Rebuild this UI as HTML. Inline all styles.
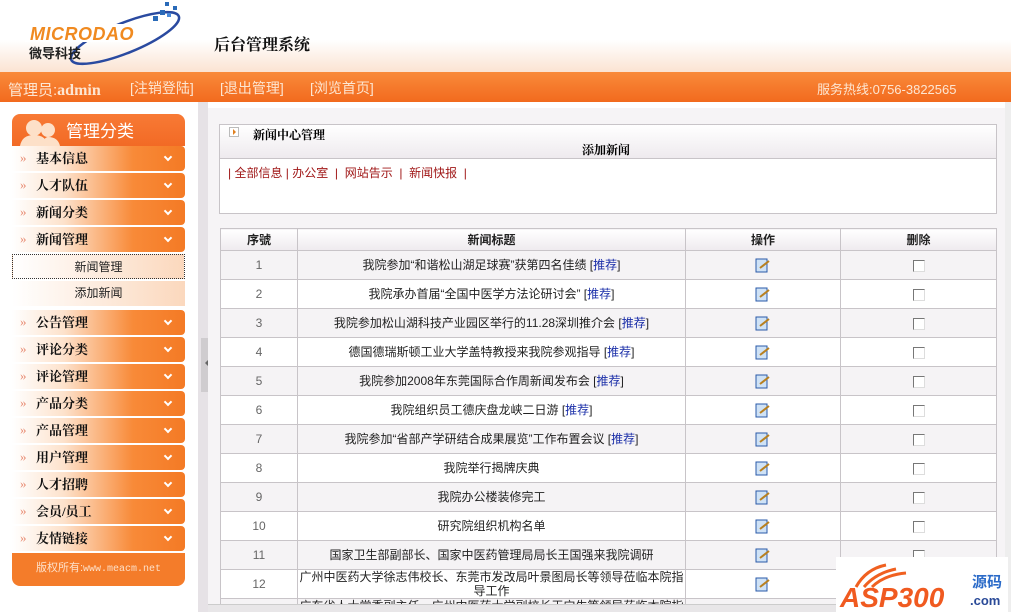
<!DOCTYPE html>
<html style="overflow:hidden;width:1011px;height:612px"><head><meta charset="utf-8"><style>
*{margin:0;padding:0;box-sizing:border-box}
body{width:1011px;height:612px;overflow:hidden;background:#fff;font-family:"Liberation Sans","Noto Sans CJK SC",sans-serif;font-size:12px;position:relative}
#hd{position:absolute;left:0;top:0;width:1011px;height:72px;background:linear-gradient(#fff 0,#fff 40px,#fbe3d2 72px)}
#bar{position:absolute;left:0;top:72px;width:1011px;height:30px;background:linear-gradient(#f98a3a,#f26a1e);color:#fde6d2;font-size:14px}
#bar span{position:absolute;top:6px}
#sep{position:absolute;left:198px;top:102px;width:10px;height:510px;background:#e6e2e6}
#handle{position:absolute;left:201px;top:338px;width:7px;height:54px;background:#cfcccf}
#main{position:absolute;left:208px;top:108px;width:797px;height:504px;background:#f6f4f6}
#sb{position:absolute;left:1005px;top:102px;width:6px;height:510px;background:#eee}
.it{position:absolute;left:12px;width:173px;height:25px;background:linear-gradient(90deg,#fff 0%,#fde2cc 30%,#f88a38 70%,#f47a25 100%);border-radius:0 4px 4px 0;font-weight:bold;font-size:13px;color:#111;line-height:25px;padding-left:24px;font-family:"Liberation Serif","Noto Serif CJK SC",serif}
.it:before{content:"»";position:absolute;left:8px;top:-1px;color:#e88a70;font-weight:normal;font-size:13px}
.it:after{content:"";position:absolute;right:14px;top:8px;width:4px;height:4px;border-right:2px solid #fff;border-bottom:2px solid #fff;transform:rotate(45deg)}
.sub{position:absolute;left:12px;width:173px;height:25px;background:linear-gradient(90deg,#fff,#fbd8bd);text-align:center;line-height:25px;font-size:12px;color:#222}
#tw{position:absolute;left:220px;top:228px;width:777px;height:376px;overflow:hidden}
table{border-collapse:collapse;width:777px;background:#fff;table-layout:fixed}
td{border:1px solid #c8c4c8;text-align:center;height:29px;font-size:12px;color:#222;line-height:14px}
tr.h td{height:22px;font-weight:bold;background:linear-gradient(#fff,#eeeaee)}
tr:nth-child(even) td{background:#f5f3f5}
td.n{color:#666}
a{color:#1a2ea8;text-decoration:none}
.cb{display:inline-block;width:12px;height:12px;border:1px solid #777;border-right-color:#ddd;border-bottom-color:#ddd;background:#fff;vertical-align:middle}
.ed{display:inline-block;vertical-align:middle}
</style></head><body>
<div id="hd">
<svg style="position:absolute;left:25px;top:0" width="160" height="66">
<ellipse cx="100" cy="38" rx="58" ry="15" transform="rotate(-22 100 38)" fill="none" stroke="#2a4aa0" stroke-width="2.5"/>
<rect x="140" y="2" width="4" height="4" fill="#2a6ab8"/><rect x="148" y="6" width="4" height="4" fill="#2a6ab8"/><rect x="135" y="10" width="5" height="5" fill="#2a6ab8"/><rect x="142" y="13" width="4" height="4" fill="#4a8ad8"/><rect x="128" y="16" width="5" height="5" fill="#2a6ab8"/>
<rect x="0" y="24" width="118" height="18" fill="#fff"/>
<text x="5" y="40" font-family="Liberation Sans" font-style="italic" font-weight="bold" font-size="18" fill="#f08a20" letter-spacing="0.5">MICRODAO</text>
<text x="4" y="58" font-family="Noto Sans CJK SC" font-weight="bold" font-size="13" fill="#222">微导科技</text>
</svg>
<div style="position:absolute;left:214px;top:32px;font-size:16px;font-weight:bold;color:#111;font-family:'Noto Serif CJK SC',serif">后台管理系统</div>
</div>
<div id="bar"><span style="left:8px;top:7px;font-size:15px">管理员:<b style="font-family:'Liberation Serif';font-size:16px">admin</b></span><span style="left:130px">[注销登陆]</span><span style="left:220px">[退出管理]</span><span style="left:310px">[浏览首页]</span><span style="left:817px;font-size:13px;top:7px">服务热线:0756-3822565</span></div>
<div id="sep"></div><div id="handle"><span style="position:absolute;left:1px;top:22px;border:3px solid transparent;border-right-color:#666"></span></div>
<div id="sb"></div>
<div style="position:absolute;left:12px;top:114px;width:173px;height:32px;background:linear-gradient(#f87a35,#f26a25);border-radius:8px 8px 0 0;color:#fff;font-size:17px;line-height:36px;padding-left:54px">管理分类
<svg style="position:absolute;left:6px;top:4px" width="44" height="28"><circle cx="16" cy="10" r="8" fill="#fde0c8"/><circle cx="30" cy="12" r="7" fill="#fde0c8"/><path d="M2 28 Q4 17 16 17 Q28 17 30 28Z M24 28 Q26 19 30 19 Q40 19 42 28Z" fill="#fde0c8"/></svg></div>
<div class="it" style="top:146px">基本信息</div>
<div class="it" style="top:173px">人才队伍</div>
<div class="it" style="top:200px">新闻分类</div>
<div class="it" style="top:227px">新闻管理</div>
<div class="sub" style="top:254px;border:1px dotted #333">新闻管理</div>
<div class="sub" style="top:281px">添加新闻</div>
<div class="it" style="top:310px">公告管理</div>
<div class="it" style="top:337px">评论分类</div>
<div class="it" style="top:364px">评论管理</div>
<div class="it" style="top:391px">产品分类</div>
<div class="it" style="top:418px">产品管理</div>
<div class="it" style="top:445px">用户管理</div>
<div class="it" style="top:472px">人才招聘</div>
<div class="it" style="top:499px">会员/员工</div>
<div class="it" style="top:526px">友情链接</div>
<div style="position:absolute;left:12px;top:553px;width:173px;height:33px;background:#f47c2a;border-radius:0 0 8px 8px;color:#fde0c8;font-size:11px;text-align:center;line-height:30px">版权所有:<span style="font-family:'Liberation Mono';font-size:10px">www.meacm.net</span></div>
<div id="main"></div>
<div style="position:absolute;left:219px;top:124px;width:778px;height:90px;background:#fff;border:1px solid #c8c4c8">
<div style="height:34px;background:linear-gradient(#fff,#eeeaee);border-bottom:1px solid #c8c4c8;position:relative">
<span style="position:absolute;left:9px;top:2px;width:10px;height:10px;border:1px solid #bbb;background:#fff"><span style="position:absolute;left:3px;top:1px;border:3px solid transparent;border-left-color:#e08020"></span></span>
<b style="position:absolute;left:33px;top:1px;font-size:12px;font-family:'Noto Serif CJK SC',serif">新闻中心管理</b>
<b style="position:absolute;left:362px;top:16px;font-size:12px;font-family:'Noto Serif CJK SC',serif">添加新闻</b></div>
<div style="color:#a01818;padding:5px 0 0 8px;font-size:12px">| 全部信息 | 办公室 &nbsp;| &nbsp;网站告示 &nbsp;| &nbsp;新闻快报 &nbsp;|</div>
</div>
<div id="tw"><table>
<colgroup><col style="width:77px"><col style="width:388px"><col style="width:155px"><col></colgroup>
<tr class="h"><td>序號</td><td>新闻标题</td><td>操作</td><td>删除</td></tr>
<tr><td class="n">1</td><td>我院参加“和谐松山湖足球赛”获第四名佳绩 [<a>推荐</a>]</td><td><svg class="ed" width="16" height="16"><rect x="1" y="2" width="11" height="13" fill="#cfe2f6" stroke="#2a5aa8"/><path d="M5 11 L14 4" stroke="#b88020" stroke-width="2"/></svg></td><td><span class="cb"></span></td></tr>
<tr><td class="n">2</td><td>我院承办首届“全国中医学方法论研讨会” [<a>推荐</a>]</td><td><svg class="ed" width="16" height="16"><rect x="1" y="2" width="11" height="13" fill="#cfe2f6" stroke="#2a5aa8"/><path d="M5 11 L14 4" stroke="#b88020" stroke-width="2"/></svg></td><td><span class="cb"></span></td></tr>
<tr><td class="n">3</td><td>我院参加松山湖科技产业园区举行的11.28深圳推介会 [<a>推荐</a>]</td><td><svg class="ed" width="16" height="16"><rect x="1" y="2" width="11" height="13" fill="#cfe2f6" stroke="#2a5aa8"/><path d="M5 11 L14 4" stroke="#b88020" stroke-width="2"/></svg></td><td><span class="cb"></span></td></tr>
<tr><td class="n">4</td><td>德国德瑞斯顿工业大学盖特教授来我院参观指导 [<a>推荐</a>]</td><td><svg class="ed" width="16" height="16"><rect x="1" y="2" width="11" height="13" fill="#cfe2f6" stroke="#2a5aa8"/><path d="M5 11 L14 4" stroke="#b88020" stroke-width="2"/></svg></td><td><span class="cb"></span></td></tr>
<tr><td class="n">5</td><td>我院参加2008年东莞国际合作周新闻发布会 [<a>推荐</a>]</td><td><svg class="ed" width="16" height="16"><rect x="1" y="2" width="11" height="13" fill="#cfe2f6" stroke="#2a5aa8"/><path d="M5 11 L14 4" stroke="#b88020" stroke-width="2"/></svg></td><td><span class="cb"></span></td></tr>
<tr><td class="n">6</td><td>我院组织员工德庆盘龙峡二日游 [<a>推荐</a>]</td><td><svg class="ed" width="16" height="16"><rect x="1" y="2" width="11" height="13" fill="#cfe2f6" stroke="#2a5aa8"/><path d="M5 11 L14 4" stroke="#b88020" stroke-width="2"/></svg></td><td><span class="cb"></span></td></tr>
<tr><td class="n">7</td><td>我院参加“省部产学研结合成果展览”工作布置会议 [<a>推荐</a>]</td><td><svg class="ed" width="16" height="16"><rect x="1" y="2" width="11" height="13" fill="#cfe2f6" stroke="#2a5aa8"/><path d="M5 11 L14 4" stroke="#b88020" stroke-width="2"/></svg></td><td><span class="cb"></span></td></tr>
<tr><td class="n">8</td><td>我院举行揭牌庆典</td><td><svg class="ed" width="16" height="16"><rect x="1" y="2" width="11" height="13" fill="#cfe2f6" stroke="#2a5aa8"/><path d="M5 11 L14 4" stroke="#b88020" stroke-width="2"/></svg></td><td><span class="cb"></span></td></tr>
<tr><td class="n">9</td><td>我院办公楼装修完工</td><td><svg class="ed" width="16" height="16"><rect x="1" y="2" width="11" height="13" fill="#cfe2f6" stroke="#2a5aa8"/><path d="M5 11 L14 4" stroke="#b88020" stroke-width="2"/></svg></td><td><span class="cb"></span></td></tr>
<tr><td class="n">10</td><td>研究院组织机构名单</td><td><svg class="ed" width="16" height="16"><rect x="1" y="2" width="11" height="13" fill="#cfe2f6" stroke="#2a5aa8"/><path d="M5 11 L14 4" stroke="#b88020" stroke-width="2"/></svg></td><td><span class="cb"></span></td></tr>
<tr><td class="n">11</td><td>国家卫生部副部长、国家中医药管理局局长王国强来我院调研</td><td><svg class="ed" width="16" height="16"><rect x="1" y="2" width="11" height="13" fill="#cfe2f6" stroke="#2a5aa8"/><path d="M5 11 L14 4" stroke="#b88020" stroke-width="2"/></svg></td><td><span class="cb"></span></td></tr>
<tr><td class="n">12</td><td>广州中医药大学徐志伟校长、东莞市发改局叶景图局长等领导莅临本院指导工作</td><td><svg class="ed" width="16" height="16"><rect x="1" y="2" width="11" height="13" fill="#cfe2f6" stroke="#2a5aa8"/><path d="M5 11 L14 4" stroke="#b88020" stroke-width="2"/></svg></td><td><span class="cb"></span></td></tr>
<tr><td class="n">13</td><td>广东省人大常委副主任、广州中医药大学副校长王宁生等领导莅临本院指导</td><td></td><td></td></tr>
</table></div>
<div style="position:absolute;left:208px;top:604px;width:797px;height:8px;background:#e8e6e8;border-top:1px solid #ccc"></div>
<div style="position:absolute;left:836px;top:557px;width:172px;height:55px;background:#fff">
<svg width="172" height="55"><path d="M20 30 Q30 12 50 8 M28 30 Q40 16 60 12 M36 30 Q48 18 70 16" stroke="#f06020" stroke-width="3" fill="none"/>
<text x="4" y="50" font-family="Liberation Sans" font-weight="bold" font-style="italic" font-size="28" fill="#f05a20">ASP300</text>
<text x="136" y="30" font-family="Noto Sans CJK SC" font-weight="bold" font-size="15" fill="#2a6ac8">源码</text>
<text x="134" y="48" font-family="Liberation Sans" font-weight="bold" font-size="13" fill="#2a4a98">.com</text></svg></div>
</body></html>
